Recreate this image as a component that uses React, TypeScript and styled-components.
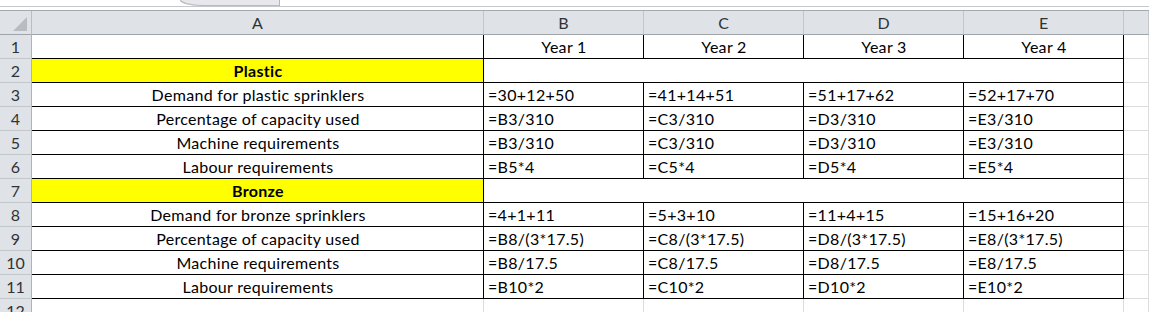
import React from "react";
import styled, { createGlobalStyle } from "styled-components";

const GlobalStyle = createGlobalStyle`
  html, body { margin: 0; padding: 0; background: #ffffff; overflow: hidden; }
  body { font-family: "Lato", "Liberation Sans", sans-serif; }
`;

type Line = "none" | "grid" | "black";
const lineColor = (l: Line | undefined) =>
  l === "black" ? "#000000" : l === "grid" ? "#dadcdd" : "transparent";

const Page = styled.div`
  width: 1149px;
  height: 312px;
  overflow: hidden;
  display: flex;
  flex-direction: column;
  background: #ffffff;
`;

const TopStrip = styled.div`
  height: 10px;
  flex: none;
`;

const TopBar = styled.div`
  height: 6px;
  border-bottom: 1px solid #c4c7cb;
  display: flex;
`;

const SheetTab = styled.div`
  margin-left: 180px;
  width: 99px;
  height: 6px;
  background: #e6e8eb;
  border-right: 1px solid #b3b7bb;
  border-bottom-left-radius: 22px 6px;
  box-shadow: inset 1px -1px 0 #b8bcc0;
`;

const Sheet = styled.div`
  display: grid;
  grid-template-columns: 32px 452px repeat(4, 160px) 1fr;
  grid-template-rows: 24px;
  grid-auto-rows: 24px;
  border-top: 1px solid #a4a9ae;
  font-family: "Lato", "Liberation Sans", sans-serif;
  font-size: 16px;
  line-height: 19px;
`;

const HeadBase = styled.div`
  box-sizing: border-box;
  background: #dfe3e8;
  color: #2f3336;
  display: flex;
  align-items: flex-end;
  justify-content: center;
  padding-bottom: 2px;
  border-bottom: 1px solid #9fa4a9;
`;

const Corner = styled(HeadBase)`
  border-right: 1px solid #b9bec3;
  align-items: flex-end;
  justify-content: flex-end;
  padding: 0 4px 3px 0;
`;

const ColHead = styled(HeadBase)`
  border-right: 1px solid #c3c7cc;
`;

const RowHead = styled(HeadBase)`
  border-right: 1px solid #aeb3b9;
  border-bottom: 1px solid #c2c7cc;
`;

const Cell = styled.div<{
  $r?: Line;
  $b?: Line;
  $center?: boolean;
  $bold?: boolean;
  $fill?: string;
  $span?: number;
}>`
  box-sizing: border-box;
  display: flex;
  align-items: flex-end;
  justify-content: ${(p) => (p.$center ? "center" : "flex-start")};
  padding: 0 3px 2px 4px;
  white-space: nowrap;
  overflow: hidden;
  letter-spacing: 0.3px;
  color: #000000;
  font-weight: ${(p) => (p.$bold ? 700 : 400)};
  background: ${(p) => p.$fill || "#ffffff"};
  border-right: 1px solid ${(p) => lineColor(p.$r)};
  border-bottom: 1px solid ${(p) => lineColor(p.$b)};
  grid-column: span ${(p) => p.$span || 1};
`;

type Row =
  | { n: number; label: string; section: true }
  | { n: number; label: string; values: string[]; center?: boolean };

const rows: Row[] = [
  { n: 1, label: "", values: ["Year 1", "Year 2", "Year 3", "Year 4"], center: true },
  { n: 2, label: "Plastic", section: true },
  { n: 3, label: "Demand for plastic sprinklers", values: ["=30+12+50", "=41+14+51", "=51+17+62", "=52+17+70"] },
  { n: 4, label: "Percentage of capacity used", values: ["=B3/310", "=C3/310", "=D3/310", "=E3/310"] },
  { n: 5, label: "Machine requirements", values: ["=B3/310", "=C3/310", "=D3/310", "=E3/310"] },
  { n: 6, label: "Labour requirements", values: ["=B5*4", "=C5*4", "=D5*4", "=E5*4"] },
  { n: 7, label: "Bronze", section: true },
  { n: 8, label: "Demand for bronze sprinklers", values: ["=4+1+11", "=5+3+10", "=11+4+15", "=15+16+20"] },
  { n: 9, label: "Percentage of capacity used", values: ["=B8/(3*17.5)", "=C8/(3*17.5)", "=D8/(3*17.5)", "=E8/(3*17.5)"] },
  { n: 10, label: "Machine requirements", values: ["=B8/17.5", "=C8/17.5", "=D8/17.5", "=E8/17.5"] },
  { n: 11, label: "Labour requirements", values: ["=B10*2", "=C10*2", "=D10*2", "=E10*2"] },
];

const columns = ["A", "B", "C", "D", "E", ""];

const CornerMark = () => (
  <svg width="14" height="14" viewBox="0 0 14 14">
    <polygon points="14,0 14,14 0,14" fill="#b8bdc3" />
  </svg>
);

export default function App() {
  return (
    <>
      <GlobalStyle />
      <Page>
        <TopStrip>
          <TopBar>
            <SheetTab />
          </TopBar>
        </TopStrip>
        <Sheet>
          <Corner>
            <CornerMark />
          </Corner>
          {columns.map((c, i) => (
            <ColHead key={i}>{c}</ColHead>
          ))}
          {rows.map((row) => (
            <React.Fragment key={row.n}>
              <RowHead>{row.n}</RowHead>
              {"section" in row ? (
                <>
                  <Cell $r="black" $b="black" $center $bold $fill="#ffff00">
                    {row.label}
                  </Cell>
                  <Cell $r="black" $b="black" $span={4} />
                </>
              ) : (
                <>
                  <Cell $r="black" $b="black" $center>
                    {row.label}
                  </Cell>
                  {row.values.map((v, i) => (
                    <Cell key={i} $r="black" $b="black" $center={row.center}>
                      {v}
                    </Cell>
                  ))}
                </>
              )}
              <Cell $r="grid" $b="grid" />
            </React.Fragment>
          ))}
          <RowHead>12</RowHead>
          {columns.map((_, i) => (
            <Cell key={i} $r="grid" $b="grid" />
          ))}
        </Sheet>
      </Page>
    </>
  );
}
